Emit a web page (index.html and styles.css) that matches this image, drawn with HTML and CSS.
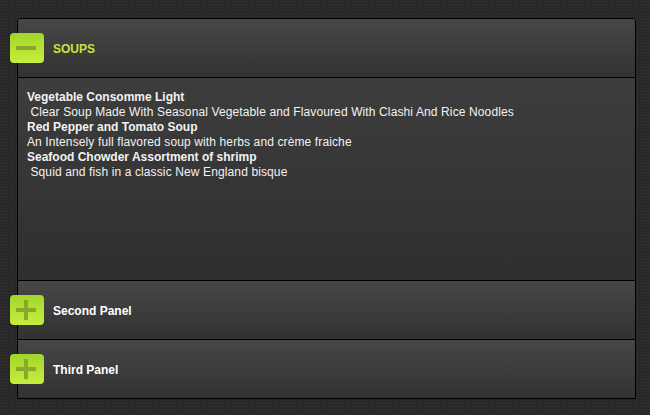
FILE: index.html
```html
<!doctype html>
<html>
    <head>
        <title>Menu Accordion</title>
        <link rel="stylesheet" href="styles.css">
    </head>
    <body>
        <div class="accordion">
            <div class="panel open">
                <div class="panel-head">
                    <span class="toggle"><span class="bar-h"></span></span>
                    <h3>SOUPS</h3>
                </div>
                <div class="panel-body">
                    <p class="dish">Vegetable Consomme Light</p>
                    <p class="desc">&nbsp;Clear Soup Made With Seasonal Vegetable and Flavoured With Clashi And Rice Noodles</p>
                    <p class="dish">Red Pepper and Tomato Soup</p>
                    <p class="desc">An Intensely full flavored soup with herbs and cr&egrave;me fraiche</p>
                    <p class="dish">Seafood Chowder Assortment of shrimp</p>
                    <p class="desc">&nbsp;Squid and fish in a classic New England bisque</p>
                </div>
            </div>
            <div class="panel">
                <div class="panel-head">
                    <span class="toggle"><span class="bar-h"></span><span class="bar-v"></span></span>
                    <h3>Second Panel</h3>
                </div>
            </div>
            <div class="panel">
                <div class="panel-head">
                    <span class="toggle"><span class="bar-h"></span><span class="bar-v"></span></span>
                    <h3>Third Panel</h3>
                </div>
            </div>
        </div>
    </body>
</html>
```

FILE: styles.css
```css
body{
    margin: 0;
    height: 415px;
    background-color: #282828;
    background-image: radial-gradient(circle, #363636 0.8px, transparent 1px);
    background-size: 3px 3px;
    font-family: "Liberation Sans", Arial, sans-serif;
    font-size: 12px;
    overflow: hidden;
}
.accordion{
    width: 617px;
    margin: 18px 0 0 17px;
    border: 1px solid #000;
    border-radius: 4px 4px 0 0;
}
.panel{
    border-bottom: 1px solid #000;
}
.panel:last-child{
    border-bottom: none;
}
.panel-head{
    position: relative;
    box-sizing: border-box;
    height: 58px;
    display: flex;
    align-items: center;
    padding: 2px 0 0 35px;
    background: linear-gradient(#474747, #323232);
}
.panel:first-child .panel-head{
    border-radius: 3px 3px 0 0;
}
.open .panel-head{
    height: 59px;
    border-bottom: 1px solid #000;
}
.panel-head h3{
    margin: 0;
    font-size: 12px;
    font-weight: bold;
    color: #fff;
}
.open .panel-head h3{
    color: #c4e63c;
}
.toggle{
    position: absolute;
    left: -8px;
    top: 14px;
    width: 34px;
    height: 30px;
    border-radius: 4px;
    background: linear-gradient(#a2d52a, #c6ef3e);
}
.bar-h{
    position: absolute;
    left: 6px;
    top: 13px;
    width: 20px;
    height: 4px;
    background: #8aa82a;
}
.bar-v{
    position: absolute;
    left: 14px;
    top: 5px;
    width: 4px;
    height: 20px;
    background: #8aa82a;
}
.panel-body{
    height: 190px;
    padding: 12px 0 0 9px;
    background: linear-gradient(#3d3d3d, #2f2f2f);
    color: #f2f2f2;
}
.panel-body p{
    margin: 0;
    line-height: 15px;
}
.dish{
    font-weight: bold;
}
.desc{
    letter-spacing: 0.12px;
}
```
